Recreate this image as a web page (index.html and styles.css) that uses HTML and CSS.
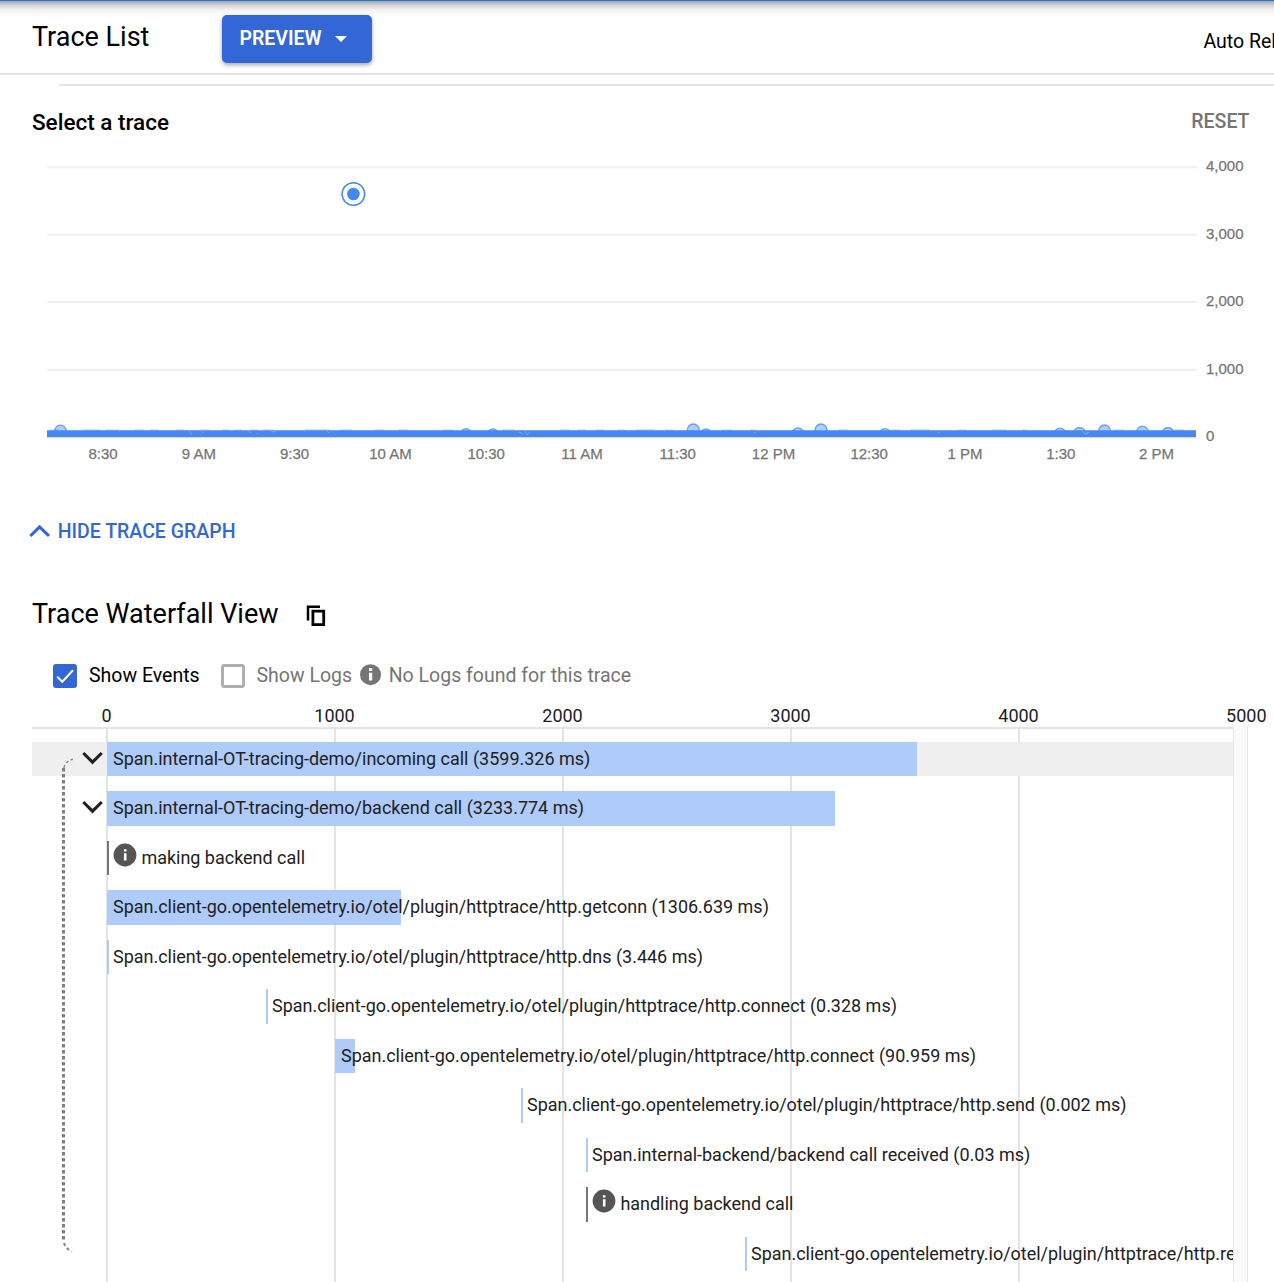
FILE: index.html
```html
<!DOCTYPE html>
<html lang="en">
<head>
<meta charset="utf-8">
<title>Trace List</title>
<link rel="stylesheet" href="styles.css">
</head>
<body>
<header class="header">
  <h1 class="title">Trace List</h1>
  <button class="preview"><span class="preview-label">PREVIEW</span><svg width="12" height="6" viewBox="0 0 12 6"><path d="M0 0H12L6 6Z" fill="#fff"/></svg></button>
  <span class="auto-reload">Auto Reload</span>
</header>
<main>
  <div class="divider"></div>
  <section class="select">
    <h2 class="select-title">Select a trace</h2>
    <button class="reset">RESET</button>
  </section>
  <svg class="chart" width="1274" height="330" viewBox="0 150 1274 330">
    <defs><clipPath id="plot"><path d="M40 150H1197V431H40Z"/></clipPath></defs>
    <path d="M47 167.2H1197M47 234.7H1197M47 302H1197M47 369.7H1197" stroke="#efefef" stroke-width="2"/>
    <path d="M47 437.5H1197" stroke="#dcdcdc" stroke-width="1.5"/>
    <g clip-path="url(#plot)" fill="#4688f1" fill-opacity=".42" stroke="#4688f1" stroke-opacity=".75" stroke-width="1.3">
      <circle cx="60.5" cy="431" r="5.8"/><circle cx="466" cy="434.5" r="5.8"/><circle cx="493" cy="434.8" r="5.8"/>
      <circle cx="693.3" cy="430" r="6"/><circle cx="706" cy="434.8" r="5.8"/><circle cx="798" cy="433.6" r="5.8"/><circle cx="821" cy="430" r="6"/>
      <circle cx="885" cy="434.4" r="5.8"/><circle cx="1060" cy="433.9" r="5.8"/><circle cx="1079.5" cy="433.3" r="5.8"/><circle cx="1104.5" cy="431" r="6"/>
      <circle cx="1142.5" cy="432" r="5.8"/><circle cx="1168" cy="433.3" r="5.8"/>
    </g>
    <path d="M47 430.2H1196V437H47Z" fill="#4688f1"/>
    <path d="M50 430H58M84 430H100M106 430H119M134 430H144M150 430H158M176 430H184M201 430H209M222 430H229M234 430H242M250 430H258M263 430H274M305 430H330M340 430H352M375 430H384M398 430H408M443 430H453M502 430H515M560 430H570M578 430H586M596 430H604M618 430H625M636 430H655M665 430H673M722 430H732M750 430H756M838 430H848M892 430H900M910 430H930M957 430H966M992 430H1006M1022 430H1027M1114 430H1124M1175 430H1184" stroke="#4688f1" stroke-opacity=".6" stroke-width=".8"/>
    <path d="M189 431l2 2 1 2M203 431v2M249 431l2 2M257 434l1-1M270 430l3 2 2-1M327 431l2 2M519 432l4 2M525 431l2 4 3-3M754 432l2 1M938 432l2 1M1082 431l3 3 3-2M1086 435l3-3" fill="none" stroke="#a9c8f8" stroke-width=".7" stroke-opacity=".7"/>
    <circle cx="353.4" cy="194" r="11.3" fill="#fff" stroke="#4688f1" stroke-width="1.5"/>
    <circle cx="353.4" cy="194" r="6.3" fill="#4688f1"/>
    <g class="y-labels">
      <text x="1206" y="171.4">4,000</text><text x="1206" y="239">3,000</text><text x="1206" y="306.4">2,000</text><text x="1206" y="374">1,000</text><text x="1206" y="441.4">0</text>
    </g>
    <g class="x-labels">
      <text x="103" y="459.4">8:30</text><text x="198.8" y="459.4">9 AM</text><text x="294.5" y="459.4">9:30</text><text x="390.4" y="459.4">10 AM</text>
      <text x="486.2" y="459.4">10:30</text><text x="582" y="459.4">11 AM</text><text x="677.7" y="459.4">11:30</text><text x="773.5" y="459.4">12 PM</text>
      <text x="869.2" y="459.4">12:30</text><text x="965" y="459.4">1 PM</text><text x="1060.8" y="459.4">1:30</text><text x="1156.6" y="459.4">2 PM</text>
    </g>
  </svg>
  <button class="hide-graph"><svg width="22" height="14" viewBox="0 0 22 14"><path d="M1.3 12L10.6 2.8L20 12" fill="none" stroke="#3367d6" stroke-width="3.1"/></svg><span class="hide-label">HIDE TRACE GRAPH</span></button>
  <section class="waterfall-head">
    <h2 class="waterfall-title">Trace Waterfall View</h2>
    <svg width="20" height="22" viewBox="0 0 20 22"><path d="M2 15.5V1.7H14" fill="none" stroke="#000" stroke-width="2.5"/><path d="M6.9 6.2H17.7V19.6H6.9Z" fill="none" stroke="#000" stroke-width="2.8"/></svg>
  </section>
  <section class="options">
    <span class="check on"><svg width="24" height="24" viewBox="0 0 24 24"><path d="M4.2 12.7L9.3 17.7L20 6.3" fill="none" stroke="#fff" stroke-width="2"/></svg></span>
    <span class="events-label">Show Events</span>
    <span class="check"></span>
    <span class="logs-label">Show Logs</span>
    <svg class="logs-icon" width="22" height="22" viewBox="0 0 22 22"><circle cx="10.5" cy="10.7" r="10.5" fill="#757575"/><path d="M9 4h3.2v2.9H9zM9 8.7h3.2v7.7H9z" fill="#fff"/></svg>
    <span class="none-label">No Logs found for this trace</span>
  </section>
  <div class="axis"><span>0</span><span>1000</span><span>2000</span><span>3000</span><span>4000</span><span class="last">5000</span></div>
  <section class="waterfall">
    <div class="rows">
      <div class="row selected"><svg class="chevron" width="22" height="15" viewBox="0 0 22 15"><path d="M1.3 2L10.5 11.2L19.8 2" fill="none" stroke="#212121" stroke-width="3.1"/></svg><div class="bar" style="width:810px"><span class="name">Span.internal-OT-tracing-demo/incoming call (3599.326 ms)</span></div></div>
      <div class="row"><svg class="chevron" width="22" height="15" viewBox="0 0 22 15"><path d="M1.3 2L10.5 11.2L19.8 2" fill="none" stroke="#212121" stroke-width="3.1"/></svg><div class="bar" style="width:728px"><span class="name">Span.internal-OT-tracing-demo/backend call (3233.774 ms)</span></div></div>
      <div class="row"><div class="bar event"><svg class="info" width="24" height="24" viewBox="0 0 24 24"><circle cx="12" cy="12" r="11.4" fill="#555"/><path d="M10.9 6.3h2.6v2.2h-2.6zM10.9 10.2h2.6v7.2h-2.6z" fill="#fff"/></svg><span class="name">making backend call</span></div></div>
      <div class="row"><div class="bar" style="width:294px"><span class="name">Span.client-go.opentelemetry.io/otel/plugin/httptrace/http.getconn (1306.639 ms)</span></div></div>
      <div class="row"><div class="bar" style="width:2px"><span class="name">Span.client-go.opentelemetry.io/otel/plugin/httptrace/http.dns (3.446 ms)</span></div></div>
      <div class="row"><div class="bar" style="margin-left:159px;width:2px"><span class="name">Span.client-go.opentelemetry.io/otel/plugin/httptrace/http.connect (0.328 ms)</span></div></div>
      <div class="row"><div class="bar" style="margin-left:228px;width:20px"><span class="name">Span.client-go.opentelemetry.io/otel/plugin/httptrace/http.connect (90.959 ms)</span></div></div>
      <div class="row"><div class="bar" style="margin-left:414px;width:2px"><span class="name">Span.client-go.opentelemetry.io/otel/plugin/httptrace/http.send (0.002 ms)</span></div></div>
      <div class="row"><div class="bar" style="margin-left:479px;width:2px"><span class="name">Span.internal-backend/backend call received (0.03 ms)</span></div></div>
      <div class="row"><div class="bar event" style="margin-left:479px"><svg class="info" width="24" height="24" viewBox="0 0 24 24"><circle cx="12" cy="12" r="11.4" fill="#555"/><path d="M10.9 6.3h2.6v2.2h-2.6zM10.9 10.2h2.6v7.2h-2.6z" fill="#fff"/></svg><span class="name">handling backend call</span></div></div>
      <div class="row"><div class="bar" style="margin-left:638px;width:2px"><span class="name">Span.client-go.opentelemetry.io/otel/plugin/httptrace/http.re</span></div></div>
      <svg class="bracket" width="14" height="500" viewBox="0 0 14 500"><path d="M3.5 10V482" stroke="#808080" stroke-width="3" stroke-dasharray="3.4 2.6"/><path d="M3.8 10Q6 2.5 13 1.2" fill="none" stroke="#888" stroke-width="1.4" stroke-dasharray="3 2.5"/><path d="M4 485Q6 491 12 493.5" fill="none" stroke="#808080" stroke-width="2" stroke-dasharray="3 2.8"/></svg>
    </div>
    <div class="scroll-track"></div>
  </section>
</main>
</body>
</html>
```
FILE: styles.css
```css
* { box-sizing: border-box; }
html, body { height: 1282px; overflow: hidden; }
body { margin: 0; background: #fff; color: #000; font-family: Roboto, sans-serif; font-size: 19.5px; }
h1, h2 { margin: 0; font-weight: 400; white-space: nowrap; }
button { border: 0; padding: 0; background: none; font: inherit; display: flex; align-items: center; white-space: nowrap; }
svg { flex: none; display: block; }

.header {
  display: flex;
  height: 75px;
  border-top: 1px solid #1a73e8;
  border-bottom: 2px solid #e4e4e4;
  background: linear-gradient(#a6a6a6, #d0d0d0 4px, #f3f3f3 9px, #fff 15px);
  overflow: hidden;
}
.title { flex: none; width: 222px; padding: 20px 0 0 32px; font-size: 27px; line-height: 32px; }
.preview {
  width: 150px; height: 48px; margin-top: 14px; padding: 0 0 1px 17px; gap: 12.5px;
  flex: none; border-radius: 5px; background: #3367d6; color: #fff; font-weight: 600;
  box-shadow: 0 2px 4px rgba(0, 0, 0, .35);
}
.preview-label { width: 83px; letter-spacing: -.05px; }
.auto-reload { flex: none; width: 71px; margin: 29px 0 0 831.5px; line-height: 24px; white-space: nowrap; }
.divider { height: 11px; margin-left: 59px; border-bottom: 2px solid #e4e4e4; }
.select { display: flex; height: 64px; padding: 23px 24.5px 0 32px; justify-content: space-between; }
.select-title { font-size: 22.5px; font-weight: 500; line-height: 27px; }
.reset { height: 24px; color: #757575; font-weight: 500; }
.chart { font-family: "Liberation Sans", Arial, sans-serif; font-size: 15px; fill: #757575; }
.chart text { stroke: #757575; stroke-width: .25px; }
.x-labels { text-anchor: middle; }
.hide-graph { height: 24px; margin: 39px 0 0 29px; gap: 6.7px; color: #3367d6; font-weight: 500; }

.waterfall-head { display: flex; height: 32px; margin: 55px 0 0 32px; align-items: center; gap: 27px; }
.waterfall-title { font-size: 27px; line-height: 32px; }
.waterfall-head svg { margin-top: 4px; }
.options { display: flex; height: 24px; margin: 34px 0 0 53px; align-items: center; white-space: nowrap; }
.options > span:not(.check) { padding-bottom: 1.2px; }
.check { width: 24px; height: 24px; border: 3px solid #afafaf; border-radius: 3px; flex: none; }
.check.on { border: 0; background: #3367d6; }
.events-label { width: 132px; margin-left: 12px; }
.logs-label { width: 103px; margin-left: 11.5px; color: #757575; }
.logs-icon { margin-top: -2px; }
.none-label { margin-left: 7.2px; color: #757575; }
.axis { display: grid; grid-template-columns: repeat(5, 228px) 141px; margin: 17px 0 0 -7.5px; height: 22px; line-height: 22px; font-size: 18px; color: #212121; text-align: center; }
.axis .last { text-align: right; padding-right: 7px; }

.waterfall { display: flex; height: 555px; margin-left: 32px; }
.rows {
  position: relative; width: 1201px; padding-top: 12.75px; overflow: hidden;
  border-top: 2px solid #e4e4e4;
  background: repeating-linear-gradient(90deg, #e4e4e4 0 2px, transparent 2px 228px) 74px 0 no-repeat;
}
.row { display: flex; height: 34.5px; margin-bottom: 15px; padding-left: 75px; }
.row.selected { background: #efefef; }
.chevron { margin: 9px 3px 0 -25px; }
.bar { height: 34.5px; padding-bottom: .5px; display: flex; align-items: center; flex: none; background: #aecbfa; }
.name { flex: none; margin-left: 6px; font-size: 17.985px; line-height: 24px; white-space: nowrap; color: #212121; }
.event { background: none; border-left: 2px solid #757575; }
.event .info { margin: -6px 0 0 4.4px; }
.event .name { margin-left: 4px; }
.bracket { position: absolute; left: 28px; top: 29px; }
.scroll-track { width: 15px; background: #fafafa; border: solid #e8e8e8; border-width: 0 1.5px; }
```
